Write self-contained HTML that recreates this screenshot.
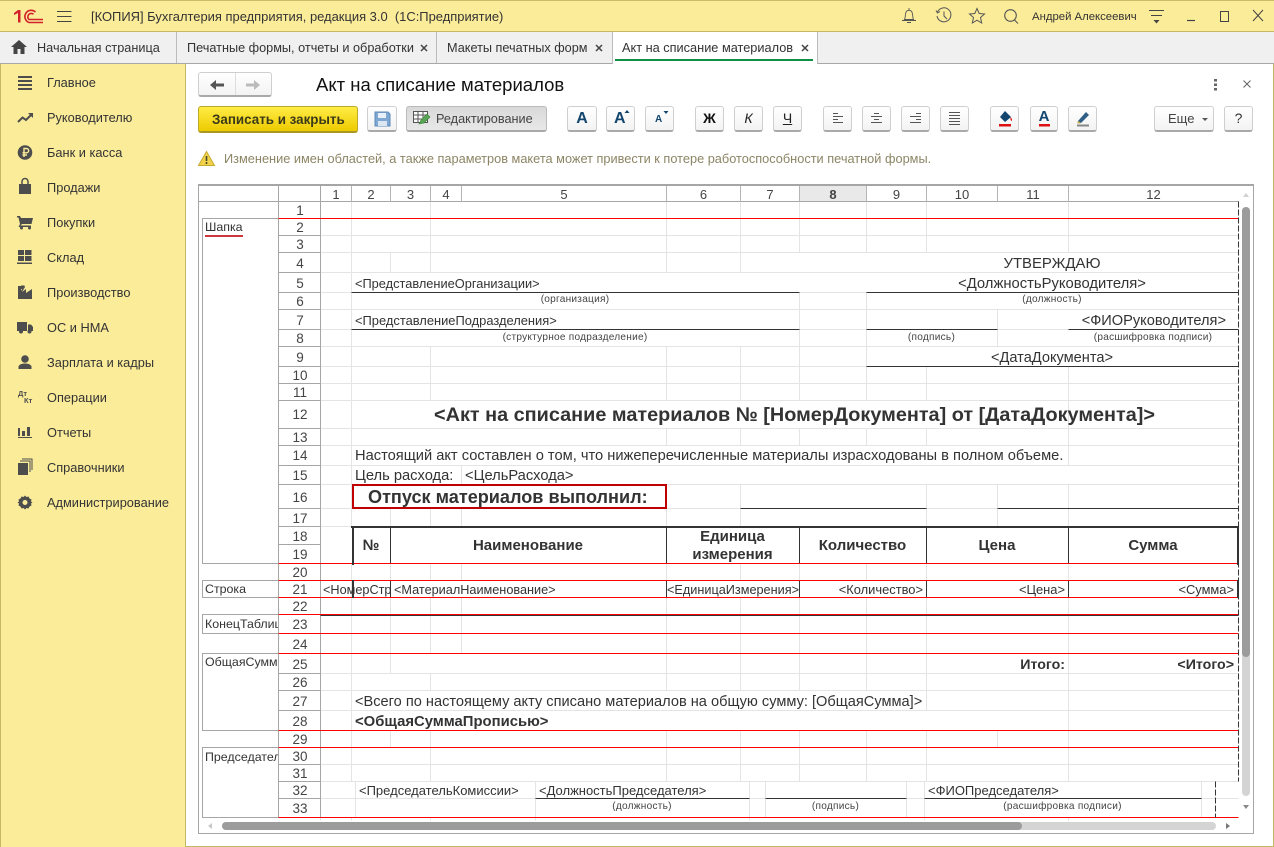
<!DOCTYPE html>
<html lang="ru"><head><meta charset="utf-8"><title>Акт на списание материалов</title>
<style>
html,body{margin:0;padding:0;background:#fff}
body{width:1274px;height:847px;overflow:hidden;position:relative;font-family:"Liberation Sans",Arial,sans-serif;color:#333}
.a{position:absolute}
.t{position:absolute;white-space:pre;line-height:16px;font-size:13px;color:#333}
.c{text-align:center}.r{text-align:right}
.b{font-weight:bold}
.n{position:absolute;left:279px;margin-top:1px;width:42px;text-align:center;font-size:13.5px;color:#444;white-space:pre}
.h{position:absolute;top:186px;height:17px;line-height:18px;text-align:center;font-size:13px;color:#444;padding-left:1px;box-sizing:border-box}
.s{font-size:10.1px;line-height:12px;color:#444;letter-spacing:.25px}
.m{font-size:14.7px}
.btn{position:absolute;top:106px;height:23px;box-sizing:content-box;border:1px solid #cfcfcf;border-bottom:2px solid #a9a9a9;border-radius:3px;background:linear-gradient(#fff,#f3f3f3)}
.btn svg{position:absolute;left:0;top:0}
.side{position:absolute;left:47px;font-size:12.8px;line-height:16px;color:#333;white-space:pre}
svg{display:block;overflow:visible}
</style></head><body>

<!-- frame -->
<div class="a" style="left:0;top:0;width:1274px;height:32px;background:#fbec9a;border-top:1px solid #c9bc66;box-sizing:border-box;border-bottom:1px solid #c4b765"></div>
<div class="a" style="left:0;top:32px;width:1274px;height:31px;background:#f0f0f0;border-bottom:1px solid #a8a8a8;box-sizing:content-box"></div>
<div class="a" style="left:0;top:64px;width:186px;height:783px;background:#fbec9a;border-left:1px solid #c4b765;border-right:1px solid #c4b765;box-sizing:border-box"></div>
<div class="a" style="left:186px;top:846px;width:1088px;height:1px;background:#c4b765"></div>
<div class="a" style="left:1273px;top:64px;width:1px;height:783px;background:#c4b765"></div>

<!-- logo 1C -->
<svg class="a" style="left:13px;top:8px" width="32" height="16" viewBox="0 0 32 16">
<path d="M1 5L5 2H7.500V14.500H5V5L1 7Z" fill="#d2232a"/>
<path d="M22.500 4A6.300 6.300 0 1 0 16 14.500H30M20.500 6.300A3.300 3.300 0 1 0 16 11.500H30" fill="none" stroke="#d2232a" stroke-width="1.600"/>
</svg>
<svg class="a" style="left:57px;top:10px" width="15" height="12"><path d="M0 1.500H14.500M0 6.500H14.500M0 11.500H14.500" stroke="#444" stroke-width="1"/></svg>
<div class="t" style="left:91px;top:9px;font-size:12.95px">[КОПИЯ] Бухгалтерия предприятия, редакция 3.0  (1С:Предприятие)</div>

<!-- right title icons -->
<svg class="a" style="left:900px;top:7px" width="18" height="18" viewBox="0 0 18 18" fill="none" stroke="#555"><path d="M4.500 12.500C5.500 11 5 6 6.500 4.300C7.500 3 10.500 3 11.500 4.300C13 6 12.500 11 13.500 12.500ZM2 13.500H16M9 1V3M7 15.500H11" stroke-width=".9"/></svg>
<svg class="a" style="left:935px;top:7px" width="18" height="18" viewBox="0 0 18 18" fill="none" stroke="#555" stroke-width="1"><path d="M2.500 5A7 7 0 1 1 2 9M1 3.500L2.500 6L5 4.500M9 4.500V9L12 12"/></svg>
<svg class="a" style="left:968px;top:7px" width="18" height="18" viewBox="0 0 18 18" fill="none" stroke="#555" stroke-width="1"><path d="M9 1.500L11.200 6.500L16.500 7L12.500 10.500L13.700 16L9 13.200L4.300 16L5.500 10.500L1.500 7L6.800 6.500Z"/></svg>
<svg class="a" style="left:1003px;top:8px" width="17" height="17" viewBox="0 0 17 17" fill="none" stroke="#555" stroke-width="1.100"><circle cx="7.500" cy="7.500" r="5.800"/><path d="M11.500 12L15 15.500"/></svg>
<div class="t" style="left:1032px;top:9px;font-size:11.35px">Андрей Алексеевич</div>
<svg class="a" style="left:1148px;top:10px" width="18" height="15"><path d="M1 .5H16M3 5.500H14" stroke="#444"/><path d="M5.500 10H11.500L8.500 13.500Z" fill="#444"/></svg>
<svg class="a" style="left:1186px;top:9px" width="80" height="14" fill="none" stroke="#444"><path d="M1 11.500H9" stroke-width="1.200"/><rect x="34.500" y="2.500" width="8" height="10"/><path d="M67 1L77 12M77 1L67 12"/></svg>

<!-- tabs -->
<svg class="a" style="left:11px;top:40px" width="16" height="14" viewBox="0 0 16 14"><path d="M8 0L16 7H13.500V14H9.500V9H6.500V14H2.500V7H0Z" fill="#444"/></svg>
<div class="t" style="left:37px;top:40px;font-size:12.7px">Начальная страница</div>
<div class="a" style="left:176px;top:32px;width:1px;height:31px;background:#bbb"></div>
<div class="t" style="left:187px;top:40px;font-size:12.7px">Печатные формы, отчеты и обработки</div>
<svg class="a" style="left:420px;top:44px" width="8" height="8"><path d="M1 1L7 7M7 1L1 7" stroke="#444" stroke-width="1.500"/></svg>
<div class="a" style="left:436px;top:32px;width:1px;height:31px;background:#bbb"></div>
<div class="t" style="left:447px;top:40px;font-size:12.7px">Макеты печатных форм</div>
<svg class="a" style="left:595px;top:44px" width="8" height="8"><path d="M1 1L7 7M7 1L1 7" stroke="#444" stroke-width="1.500"/></svg>
<div class="a" style="left:612px;top:32px;width:206px;height:32px;background:#fff;border-left:1px solid #bbb;border-right:1px solid #bbb;box-sizing:border-box"></div>
<div class="a" style="left:615px;top:59px;width:198px;height:2px;background:#0f9047"></div>
<div class="t" style="left:622px;top:40px;font-size:12.75px">Акт на списание материалов</div>
<svg class="a" style="left:801px;top:44px" width="8" height="8"><path d="M1 1L7 7M7 1L1 7" stroke="#444" stroke-width="1.500"/></svg>

<!-- sidebar -->
<svg class="a" style="left:0;top:64px" width="186" height="460" viewBox="0 64 186 460" fill="#4d4d4d">
<path d="M18 76H32V78H18ZM18 80H32V82H18ZM18 84H32V86H18ZM18 88H32V90H18Z"/>
<path d="M18 122L22.500 117.500L26 120L31 115" fill="none" stroke="#4d4d4d" stroke-width="2"/><path d="M28 113H33V118Z"/>
<circle cx="25" cy="152.500" r="7.300"/><path d="M24 157V148.500H26.500A2 2 0 0 1 26.500 152.800H22.500M22.500 155H27" fill="none" stroke="#fbec9a" stroke-width="1.400"/>
<path d="M19 184H31V194H19Z"/><path d="M22 185V181.500A3 3 0 0 1 28 181.500V185" fill="none" stroke="#4d4d4d" stroke-width="1.500"/>
<path d="M17 216H20L21 218H33L31.500 224H22L20.500 225.500H31V227H18.500L20 224L18.500 217.500H17Z"/><circle cx="21.500" cy="228" r="1.500"/><circle cx="29.500" cy="228" r="1.500"/>
<path d="M18 250H24V255H18ZM25 250H31.500V255H25ZM18 256H24V261H18ZM25 256H31.500V261H25ZM17 262.500H32V264H17Z"/>
<path d="M18 299V286H21V291L24 285L25 287L22 292L26 289V293L32 289V299Z"/><path d="M21 285.500H24L22 289H21Z"/>
<path d="M17 322H27V331H17ZM28 324.500H31L33 327V331H28Z"/><circle cx="21" cy="331.500" r="2"/><circle cx="29.500" cy="331.500" r="2"/>
<circle cx="25" cy="359" r="3.800"/><path d="M18.500 369V366.500C19 364.500 22 363.500 25 363.500C28 363.500 31 364.500 31.500 366.500V369Z"/>
<path d="M18 428H20V436H18ZM22 431H25V436H22ZM27 427H30V436H27ZM18 437H32V438H18Z"/>
<path d="M18 463H28V475H18Z"/><path d="M20 461H30V472M22 459H32V470" fill="none" stroke="#4d4d4d"/>
<path d="M25 495.500L26.500 497L28.500 496.500L29.500 498.500L31.500 499.500L31 501.500L32.500 502.500L31 503.500L31.500 505.500L29.500 506.500L28.500 508.500L26.500 508L25 509.500L23.500 508L21.500 508.500L20.500 506.500L18.500 505.500L19 503.500L17.500 502.500L19 501.500L18.500 499.500L20.500 498.500L21.500 496.500L23.500 497Z"/><circle cx="25" cy="502.500" r="2.500" fill="#fbec9a"/>
</svg>
<div class="t b" style="left:18px;top:390px;font-size:7.5px;line-height:8px;color:#4d4d4d">Дт</div>
<div class="t b" style="left:24px;top:397px;font-size:7.5px;line-height:8px;color:#4d4d4d">Кт</div>
<div class="side" style="top:75px">Главное</div>
<div class="side" style="top:110px">Руководителю</div>
<div class="side" style="top:145px">Банк и касса</div>
<div class="side" style="top:180px">Продажи</div>
<div class="side" style="top:215px">Покупки</div>
<div class="side" style="top:250px">Склад</div>
<div class="side" style="top:285px">Производство</div>
<div class="side" style="top:320px">ОС и НМА</div>
<div class="side" style="top:355px">Зарплата и кадры</div>
<div class="side" style="top:390px">Операции</div>
<div class="side" style="top:425px">Отчеты</div>
<div class="side" style="top:460px">Справочники</div>
<div class="side" style="top:495px">Администрирование</div>

<!-- form head -->
<div class="a" style="left:198px;top:72px;width:72px;height:22px;border:1px solid #cfcfcf;border-bottom:2px solid #a9a9a9;border-radius:3px;background:linear-gradient(#fff,#f3f3f3)"></div>
<div class="a" style="left:235px;top:73px;width:1px;height:22px;background:#ddd"></div>
<svg class="a" style="left:210px;top:79px" width="50" height="12"><path d="M0 6L6 1V4.500H14V7.500H6V11Z" fill="#555"/><path d="M50 6L44 1V4.500H36V7.500H44V11Z" fill="#bbb"/></svg>
<div class="t" style="left:316px;top:75px;font-size:18.5px;line-height:20px;color:#111">Акт на списание материалов</div>
<svg class="a" style="left:1214px;top:79px" width="4" height="12" fill="#666"><rect x="0" y="0" width="3" height="2.500"/><rect x="0" y="4.500" width="3" height="2.500"/><rect x="0" y="9" width="3" height="2.500"/></svg>
<svg class="a" style="left:1243px;top:80px" width="8" height="8"><path d="M.5 .5L7.500 7.500M7.500 .5L.5 7.500" stroke="#666"/></svg>

<!-- toolbar -->
<div class="a" style="left:198px;top:106px;width:158px;height:24px;border:1px solid #bda827;border-bottom:2px solid #a99722;border-radius:3px;background:linear-gradient(#ffec45,#eecb00)"></div>
<div class="t b" style="left:212px;top:112px;font-size:13.4px;color:#3a3a1a">Записать и закрыть</div>
<div class="btn" style="left:367px;width:28px"><svg width="28" height="23"><path d="M7 5H20L22 7V19H7Z" fill="#7ea7d4" stroke="#5f8ab8"/><path d="M10 6H18V11H10Z" fill="#e8f0fa"/><path d="M10 14H19V19H10Z" fill="#dbe6f3"/></svg></div>
<div class="a" style="left:406px;top:106px;width:139px;height:23px;border:1px solid #bbb;border-bottom:2px solid #a9a9a9;border-radius:3px;background:linear-gradient(#d9d9d9,#e8e8e8)"></div>
<svg class="a" style="left:413px;top:111px" width="18" height="16"><path d="M.5 .5H14.500V11.500H.5ZM.5 4H14.500M5 .5V11.500M10 .5V11.500M.5 8H14.500" fill="#fff" stroke="#555"/><path d="M6 13L8 9L14 3L17 6L11 12Z" fill="#56a653" stroke="#3c7a3a" stroke-width=".6"/></svg>
<div class="t" style="left:436px;top:111px;font-size:12.7px;color:#444">Редактирование</div>

<div class="btn t b c" style="left:567px;width:28px;font-size:16px;line-height:23px;color:#12466f">A</div>
<div class="btn t b" style="left:606px;width:27px;font-size:16px;line-height:24px;color:#12466f;text-indent:7px">A<svg width="27" height="23"><path d="M17.500 6L20 3L22.500 6Z" fill="#12466f"/></svg></div>
<div class="btn t b" style="left:645px;width:27px;font-size:10px;line-height:26px;color:#12466f;text-indent:9px">A<svg width="27" height="23"><path d="M17.500 4L20 7L22.500 4Z" fill="#12466f"/></svg></div>
<div class="btn t b c" style="left:695px;width:27px;font-size:14px;line-height:23px;color:#111">Ж</div>
<div class="btn t c" style="left:734px;width:27px;font-size:14px;line-height:23px;font-style:italic;color:#222">К</div>
<div class="btn t c" style="left:773px;width:27px;font-size:14px;line-height:22px;text-decoration:underline;color:#222">Ч</div>
<div class="btn" style="left:823px;width:27px"><svg width="27" height="23" stroke="#555"><path d="M9 6.500H14M9 9.500H19M9 12.500H14M9 15.500H19"/></svg></div>
<div class="btn" style="left:862px;width:27px"><svg width="27" height="23" stroke="#555"><path d="M11 6.500H16M8 9.500H19M11 12.500H16M8 15.500H19"/></svg></div>
<div class="btn" style="left:901px;width:27px"><svg width="27" height="23" stroke="#555"><path d="M14 6.500H19M8 9.500H19M14 12.500H19M8 15.500H19"/></svg></div>
<div class="btn" style="left:940px;width:27px"><svg width="27" height="23" stroke="#555"><path d="M8 5.500H19M8 8.500H19M8 11.500H19M8 14.500H19M8 17.500H19"/></svg></div>
<div class="btn" style="left:990px;width:27px"><svg width="27" height="23"><path d="M14 4L20 10L14 15L9 10Z" fill="#12466f"/><path d="M19.500 10Q22 13 20.500 14Q19 13 19.500 10Z" fill="#d11"/><rect x="8" y="17" width="12" height="2.500" fill="#d11"/></svg></div>
<div class="btn t b c" style="left:1030px;width:26px;font-size:15px;line-height:20px;color:#12466f">A<svg width="26" height="23"><rect x="8" y="17" width="11" height="2.500" fill="#d11"/></svg></div>
<div class="btn" style="left:1068px;width:27px"><svg width="27" height="23"><path d="M9 14L17 5L20 8L12 16L8.500 16.500Z" fill="#2f5f86"/><path d="M9 14L12 16L8.500 16.500Z" fill="#d8b23a"/><rect x="8" y="17.500" width="12" height="2" fill="#888"/></svg></div>
<div class="btn t" style="left:1154px;width:58px;font-size:13px;line-height:23px;color:#444;text-indent:13px">Еще<svg width="58" height="23"><path d="M47 11H53L50 14Z" fill="#555"/></svg></div>
<div class="btn t c" style="left:1224px;width:27px;font-size:14px;line-height:23px;color:#333">?</div>

<!-- warning -->
<svg class="a" style="left:198px;top:151px" width="17" height="15"><path d="M8.500 .5L16.500 14.500H.5Z" fill="#f1d24a" stroke="#c7ab2d"/><path d="M8.500 5V10M8.500 11V13" stroke="#4a4a2a" stroke-width="1.600"/></svg>
<div class="t" style="left:224px;top:151px;font-size:12.77px;color:#8c8565">Изменение имен областей, а также параметров макета может привести к потере работоспособности печатной формы.</div>

<!-- sheet -->
<svg class="a" style="left:0;top:0" width="1274" height="847" fill="none">
<g transform="translate(.5 .5)">
<rect x="198" y="184" width="1055" height="649" stroke="#a6a6a6"/>
<!-- highlighted col -->
<rect x="799" y="185" width="67" height="16" fill="#e9e9e9" stroke="none"/>
<!-- horizontal light -->
<path stroke="#e4e4e4" d="M320 218H1238M320 235H1238M320 252H1238M320 272H1238M320 292H1238M320 309H1238M320 329H1238M320 346H1238M320 366H1238M320 383H1238M320 400H1238M320 428H1238M320 445H1238M320 465H1238M320 484H1238M320 508H1238M320 526H1238M320 580H1238M320 597H1238M320 614H1238M320 633H1238M320 653H1238M320 673H1238M320 690H1238M320 710H1238M320 730H1238M320 747H1238M320 764H1238M320 781H1238M320 798H1238"/>
<!-- vertical light -->
<path stroke="#e4e4e4" d="M351 201V526M351 563V781
M390 252V272M390 508V526M390 563V580M390 597V673M390 730V747
M430 201V272M430 346V400M430 508V526M430 563V580M430 597V653M430 673V690M430 730V781
M461 465V484M461 508V526M461 563V580M461 597V653
M666 201V272M666 346V400M666 428V445M666 508V526M666 563V580M666 597V690M666 730V781
M740 201V272M740 346V400M740 428V445M740 484V526M740 563V580M740 597V690M740 730V781
M799 201V252M799 292V400M799 428V445M799 563V580M799 597V690M799 730V781
M866 201V252M866 292V400M866 428V445M866 563V580M866 597V690M866 730V781
M926 201V252M926 366V400M926 428V445M926 484V526M926 563V580M926 597V710M926 730V781
M997 309V346M997 484V526M997 730V747
M1068 201V252M1068 366V465M1068 484V526M1068 563V580M1068 597V781
M355 781V817M535 781V817M749 781V817M765 781V817M906 781V817M924 781V817M1201 781V817"/>
<path stroke="#e4e4e4" d="M320 817V820M351 817V820M430 817V820M535 817V820M749 817V820M924 817V820M1068 817V820"/>
<!-- column header -->
<path stroke="#a6a6a6" d="M198 201H1238M278 184V817M320 184V817"/>
<path stroke="#b5b5b5" d="M351 185V201M390 185V201M430 185V201M461 185V201M666 185V201M740 185V201M799 185V201M866 185V201M926 185V201M997 185V201M1068 185V201"/>
<!-- row header lines -->
<path stroke="#a6a6a6" d="M278 218H320M278 235H320M278 252H320M278 272H320M278 292H320M278 309H320M278 329H320M278 346H320M278 366H320M278 383H320M278 400H320M278 428H320M278 445H320M278 465H320M278 484H320M278 508H320M278 526H320M278 544H320M278 563H320M278 580H320M278 597H320M278 614H320M278 633H320M278 653H320M278 673H320M278 690H320M278 710H320M278 730H320M278 747H320M278 764H320M278 781H320M278 798H320M278 817H320"/>
<!-- region boxes -->
<path stroke="#a6a6a6" d="M278 218H202V563H278M278 580H202V597H278M278 614H202V633H278M278 653H202V730H278M278 747H202V817H278"/>
<!-- underlines -->
<path stroke="#333" d="M351 292H799M866 292H1238M351 329H799M866 329H997M1068 329H1238M866 366H1238M740 508H926M997 508H1238M535 798H749M765 798H906M924 798H1201"/>
<!-- table thin -->
<path stroke="#333" d="M390 526V563M666 526V563M799 526V563M926 526V563M1068 526V563M390 580V597M666 580V597M799 580V597M926 580V597M1068 580V597M320 615H1238"/>
<!-- red -->
<path stroke="#f00" d="M278 218H1238M278 563H1238M278 580H1238M278 597H1238M278 614H1238M278 633H1238M278 653H1238M278 730H1238M278 747H1238M278 817H1238"/>
<!-- page break -->
<path stroke="#333" stroke-dasharray="6 2" d="M1238 201V781M1215 781V817"/>
</g>
<!-- 2px lines, pixel aligned -->
<path d="M198 185H1254" stroke="#a6a6a6" stroke-width="2"/>
<path stroke="#333" stroke-width="2" d="M351 527H1239M353 526V565M1238 526V565M353 580V598M1238 580V598"/>
<rect x="353" y="485" width="313" height="23" stroke="#c00000" stroke-width="2"/>
<!-- scrollbars -->
<rect x="1242" y="207" width="8" height="589" rx="4" fill="#d4d4d4"/>
<rect x="1242" y="207" width="8" height="450" rx="4" fill="#9c9c9c"/>
<rect x="222" y="822" width="994" height="8" rx="4" fill="#d4d4d4"/>
<rect x="222" y="822" width="800" height="8" rx="4" fill="#9c9c9c"/>
</svg>
<svg class="a" style="left:0;top:0" width="1274" height="847">
<path d="M1243 197H1249L1246 193Z" fill="#d0d0d0"/><path d="M1243 805H1249L1246 809Z" fill="#888"/>
<path d="M212 823V829L208 826Z" fill="#c8c8c8"/><path d="M1226 823V829L1230 826Z" fill="#777"/>
</svg>

<!-- col headers -->
<div class="h" style="left:320px;width:31px">1</div><div class="h" style="left:351px;width:39px">2</div><div class="h" style="left:390px;width:40px">3</div><div class="h" style="left:430px;width:31px">4</div><div class="h" style="left:461px;width:205px">5</div><div class="h" style="left:666px;width:74px">6</div><div class="h" style="left:740px;width:59px">7</div><div class="h b" style="left:799px;width:67px">8</div><div class="h" style="left:866px;width:60px">9</div><div class="h" style="left:926px;width:71px">10</div><div class="h" style="left:997px;width:71px">11</div><div class="h" style="left:1068px;width:170px">12</div>

<!-- row numbers -->
<div class="n" style="top:201px;line-height:18px">1</div><div class="n" style="top:218px;line-height:18px">2</div><div class="n" style="top:235px;line-height:18px">3</div><div class="n" style="top:252px;line-height:21px">4</div><div class="n" style="top:272px;line-height:21px">5</div><div class="n" style="top:292px;line-height:18px">6</div><div class="n" style="top:309px;line-height:21px">7</div><div class="n" style="top:329px;line-height:18px">8</div><div class="n" style="top:346px;line-height:21px">9</div><div class="n" style="top:366px;line-height:18px">10</div><div class="n" style="top:383px;line-height:18px">11</div><div class="n" style="top:400px;line-height:28px">12</div><div class="n" style="top:428px;line-height:18px">13</div><div class="n" style="top:445px;line-height:19px">14</div><div class="n" style="top:465px;line-height:19px">15</div><div class="n" style="top:484px;line-height:25px">16</div><div class="n" style="top:508px;line-height:19px">17</div><div class="n" style="top:526px;line-height:19px">18</div><div class="n" style="top:544px;line-height:20px">19</div><div class="n" style="top:563px;line-height:18px">20</div><div class="n" style="top:580px;line-height:18px">21</div><div class="n" style="top:597px;line-height:18px">22</div><div class="n" style="top:614px;line-height:20px">23</div><div class="n" style="top:633px;line-height:21px">24</div><div class="n" style="top:653px;line-height:21px">25</div><div class="n" style="top:673px;line-height:18px">26</div><div class="n" style="top:690px;line-height:21px">27</div><div class="n" style="top:710px;line-height:21px">28</div><div class="n" style="top:730px;line-height:18px">29</div><div class="n" style="top:747px;line-height:18px">30</div><div class="n" style="top:764px;line-height:18px">31</div><div class="n" style="top:781px;line-height:18px">32</div><div class="n" style="top:798px;line-height:20px">33</div>

<!-- region names -->
<div class="t" style="left:205px;top:219px;font-size:12.4px">Шапка</div>
<div class="a" style="left:205px;top:235px;width:38px;height:2px;background:#c8383c"></div>
<div class="t" style="left:205px;top:581px;font-size:12.4px">Строка</div>
<div class="a t" style="left:205px;top:616px;width:73px;overflow:hidden;font-size:12.4px">КонецТаблицы</div>
<div class="a t" style="left:205px;top:654px;width:73px;overflow:hidden;font-size:12.4px">ОбщаяСумма</div>
<div class="a t" style="left:205px;top:749px;width:73px;overflow:hidden;font-size:12.4px">Председатель</div>

<!-- cell text -->
<div class="t c" style="left:866px;width:372px;top:256px;font-size:14.9px">УТВЕРЖДАЮ</div>
<div class="t" style="left:355px;top:276px;font-size:12.8px">&lt;ПредставлениеОрганизации&gt;</div>
<div class="t c" style="left:866px;width:372px;top:276px;font-size:14.8px">&lt;ДолжностьРуководителя&gt;</div>
<div class="t c s" style="left:351px;width:448px;top:294px">(организация)</div>
<div class="t c s" style="left:866px;width:372px;top:294px">(должность)</div>
<div class="t" style="left:355px;top:313px;font-size:12.9px">&lt;ПредставлениеПодразделения&gt;</div>
<div class="t r" style="left:1068px;width:158px;top:313px;font-size:14.6px">&lt;ФИОРуководителя&gt;</div>
<div class="t c s" style="left:351px;width:448px;top:332px">(структурное подразделение)</div>
<div class="t c s" style="left:866px;width:131px;top:332px">(подпись)</div>
<div class="t c s" style="left:1068px;width:170px;top:332px">(расшифровка подписи)</div>
<div class="t c" style="left:866px;width:372px;top:350px;font-size:14.6px">&lt;ДатаДокумента&gt;</div>
<div class="t c b" style="left:351px;width:887px;top:405px;font-size:19.85px;line-height:20px">&lt;Акт на списание материалов № [НомерДокумента] от [ДатаДокумента]&gt;</div>
<div class="t" style="left:355px;top:448px;font-size:14.67px">Настоящий акт составлен о том, что нижеперечисленные материалы израсходованы в полном объеме.</div>
<div class="t m" style="left:355px;top:468px">Цель расхода:</div>
<div class="t m" style="left:465px;top:468px">&lt;ЦельРасхода&gt;</div>
<div class="t b" style="left:368px;top:489px;font-size:18.1px">Отпуск материалов выполнил:</div>
<div class="t b c" style="left:352px;width:38px;top:538px;font-size:15px">№</div>
<div class="t b c" style="left:390px;width:276px;top:538px;font-size:15px">Наименование</div>
<div class="t b c" style="left:666px;width:133px;top:528px;font-size:15px;line-height:18px">Единица
измерения</div>
<div class="t b c" style="left:799px;width:127px;top:538px;font-size:15px">Количество</div>
<div class="t b c" style="left:926px;width:142px;top:538px;font-size:15px">Цена</div>
<div class="t b c" style="left:1068px;width:170px;top:538px;font-size:15px">Сумма</div>
<div class="a t" style="left:323px;top:582px;width:68px;overflow:hidden;font-size:12.7px">&lt;НомерСтр&gt;</div>
<div class="t" style="left:394px;top:582px;font-size:12.7px">&lt;МатериалНаименование&gt;</div>
<div class="a t c" style="left:666px;top:582px;width:134px;overflow:hidden;font-size:12.7px">&lt;ЕдиницаИзмерения&gt;</div>
<div class="t r" style="left:799px;width:124px;top:582px;font-size:12.9px">&lt;Количество&gt;</div>
<div class="t r" style="left:926px;width:139px;top:582px;font-size:12.9px">&lt;Цена&gt;</div>
<div class="t r" style="left:1068px;width:166px;top:582px;font-size:12.9px">&lt;Сумма&gt;</div>
<div class="t b r" style="left:926px;width:139px;top:657px;font-size:14.2px">Итого:</div>
<div class="t b r" style="left:1068px;width:166px;top:657px;font-size:14.2px">&lt;Итого&gt;</div>
<div class="t" style="left:355px;top:694px;font-size:14.6px">&lt;Всего по настоящему акту списано материалов на общую сумму: [ОбщаяСумма]&gt;</div>
<div class="t b" style="left:355px;top:714px;font-size:14.85px">&lt;ОбщаяСуммаПрописью&gt;</div>
<div class="t" style="left:359px;top:783px;font-size:13px">&lt;ПредседательКомиссии&gt;</div>
<div class="t" style="left:539px;top:783px;font-size:13px">&lt;ДолжностьПредседателя&gt;</div>
<div class="t" style="left:928px;top:783px;font-size:13px">&lt;ФИОПредседателя&gt;</div>
<div class="t c s" style="left:535px;width:214px;top:801px">(должность)</div>
<div class="t c s" style="left:765px;width:141px;top:801px">(подпись)</div>
<div class="t c s" style="left:924px;width:277px;top:801px">(расшифровка подписи)</div>
</body></html>
